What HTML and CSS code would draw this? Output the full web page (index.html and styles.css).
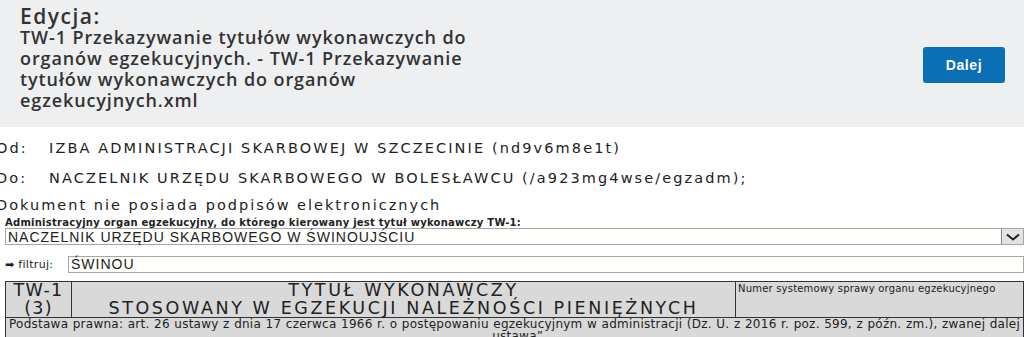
FILE: index.html
```html
<!DOCTYPE html>
<html lang="pl">
<head>
    <meta charset="UTF-8">
    <meta name="viewport" content="width=device-width, initial-scale=1.0">
    <title>Edycja</title>
    <link rel="stylesheet" href="styles.css">
</head>
<body>
    <header class="edit-bar">
        <div class="edit-info">
            <h1 class="edit-title">Edycja:</h1>
            <p class="edit-file">TW-1 Przekazywanie tytułów wykonawczych do organów egzekucyjnych. - TW-1 Przekazywanie tytułów wykonawczych do organów egzekucyjnych.xml</p>
        </div>
        <button class="next-button">Dalej</button>
    </header>

    <main class="doc">
        <div class="addr-row">
            <span class="addr-label">Od:</span>
            <span>IZBA ADMINISTRACJI SKARBOWEJ W SZCZECINIE (nd9v6m8e1t)</span>
        </div>
        <div class="addr-row addr-row-to">
            <span class="addr-label">Do:</span>
            <span>NACZELNIK URZĘDU SKARBOWEGO W BOLESŁAWCU (/a923mg4wse/egzadm);</span>
        </div>
        <div class="sign-info">Dokument nie posiada podpisów elektronicznych</div>

        <div class="form">
            <label class="field-label">Administracyjny organ egzekucyjny, do którego kierowany jest tytuł wykonawczy TW-1:</label>
            <div class="select-box">
                <span class="select-value">NACZELNIK URZĘDU SKARBOWEGO W ŚWINOUJŚCIU</span>
                <span class="select-arrow">
                    <svg width="14" height="8" viewBox="0 0 14 8" fill="none" stroke="#222" stroke-width="2">
                        <path d="M1 1.5l6 5 6-5"/>
                    </svg>
                </span>
            </div>

            <div class="filter-row">
                <span class="filter-label">&#10145; filtruj:</span>
                <div class="filter-input">ŚWINOU</div>
            </div>

            <table class="tw-table">
                <tr>
                    <td class="tw-code">TW-1<br>(3)</td>
                    <td class="tw-title">TYTUŁ WYKONAWCZY<br>STOSOWANY W EGZEKUCJI NALEŻNOŚCI PIENIĘŻNYCH</td>
                    <td class="tw-number">Numer systemowy sprawy organu egzekucyjnego</td>
                </tr>
                <tr>
                    <td class="tw-basis" colspan="3">Podstawa prawna: art. 26 ustawy z dnia 17 czerwca 1966 r. o postępowaniu egzekucyjnym w administracji (Dz. U. z 2016 r. poz. 599, z późn. zm.), zwanej dalej „ustawą”</td>
                </tr>
            </table>
        </div>
    </main>
</body>
</html>
```

FILE: styles.css
```css
* {
    margin: 0;
    padding: 0;
    box-sizing: border-box;
}

body {
    font-family: "Liberation Sans", Arial, sans-serif;
    background-color: white;
    color: #222;
    overflow: hidden;
}

.edit-bar {
    background-color: #eeeff1;
    height: 127px;
    padding: 6px 19px 0 20px;
    display: flex;
    justify-content: space-between;
    align-items: center;
}

.edit-info {
    width: 470px;
    align-self: flex-start;
}

.edit-title {
    font-family: "Open Sans", sans-serif;
    font-size: 21px;
    font-weight: 600;
    letter-spacing: 1.5px;
    color: #333;
    line-height: 20px;
}

.edit-file {
    font-family: "Open Sans", sans-serif;
    font-size: 18px;
    font-weight: 600;
    letter-spacing: 0.9px;
    color: #333;
    line-height: 21px;
    margin-top: 1px;
}

.next-button {
    background-color: #0a6fb5;
    color: white;
    border: none;
    border-radius: 3px;
    width: 82px;
    height: 36px;
    font-family: "Liberation Sans", Arial, sans-serif;
    font-size: 14px;
    font-weight: bold;
    letter-spacing: 0.6px;
    margin-top: -4px;
}

.doc {
    padding-top: 12px;
}

.addr-row {
    display: flex;
    font-family: "DejaVu Sans", sans-serif;
    font-size: 14.5px;
    letter-spacing: 2.1px;
    line-height: 18px;
    margin-left: -4px;
}

.addr-row-to {
    margin-top: 12px;
}

.addr-label {
    width: 53px;
    flex-shrink: 0;
}

.sign-info {
    font-family: "DejaVu Sans", sans-serif;
    font-size: 14.5px;
    letter-spacing: 2px;
    line-height: 18px;
    margin: 9px 0 0 -4px;
}

.form {
    padding-left: 5px;
}

.field-label {
    display: block;
    font-family: "DejaVu Sans", Verdana, sans-serif;
    font-size: 10px;
    font-weight: bold;
    letter-spacing: 0.25px;
    line-height: 11px;
    margin-top: 3px;
}

.select-box {
    height: 17px;
    border: 1px solid #a3a6ab;
    background-color: #fffffc;
    display: flex;
    justify-content: space-between;
    align-items: center;
    font-size: 14px;
    letter-spacing: 1px;
}

.select-value {
    padding-left: 2px;
}

.select-arrow {
    width: 22px;
    height: 15px;
    background-color: #e3e3e3;
    border-left: 1px solid #888;
    display: flex;
    align-items: center;
    justify-content: center;
}

.filter-row {
    display: flex;
    align-items: center;
    margin-top: 11px;
}

.filter-label {
    width: 63px;
    font-family: "DejaVu Sans", Verdana, sans-serif;
    font-size: 11px;
    letter-spacing: 0.3px;
}

.filter-input {
    flex: 1;
    height: 17px;
    border: 1px solid #a3a6ab;
    background-color: #fffffc;
    font-size: 14px;
    letter-spacing: 1px;
    line-height: 15px;
    padding-left: 2px;
}

.tw-table {
    width: 100%;
    border-collapse: collapse;
    background-color: #d9d9d9;
    margin-top: 8px;
    font-family: "DejaVu Sans", Verdana, sans-serif;
}

.tw-table td {
    border: 1px solid #333;
    vertical-align: top;
}

.tw-code {
    width: 66px;
    height: 35px;
    font-size: 17.5px;
    letter-spacing: 1.3px;
    line-height: 17.5px;
    text-align: center;
}

.tw-title {
    font-size: 17.5px;
    letter-spacing: 2.6px;
    line-height: 17.5px;
    text-align: center;
}

.tw-number {
    width: 288px;
    font-size: 10px;
    letter-spacing: 0.2px;
    padding: 1px 2px;
}

.tw-basis {
    font-size: 12px;
    letter-spacing: 0.25px;
    line-height: 12px;
    padding: 0 3px;
    text-align: justify;
    text-align-last: center;
}
```
